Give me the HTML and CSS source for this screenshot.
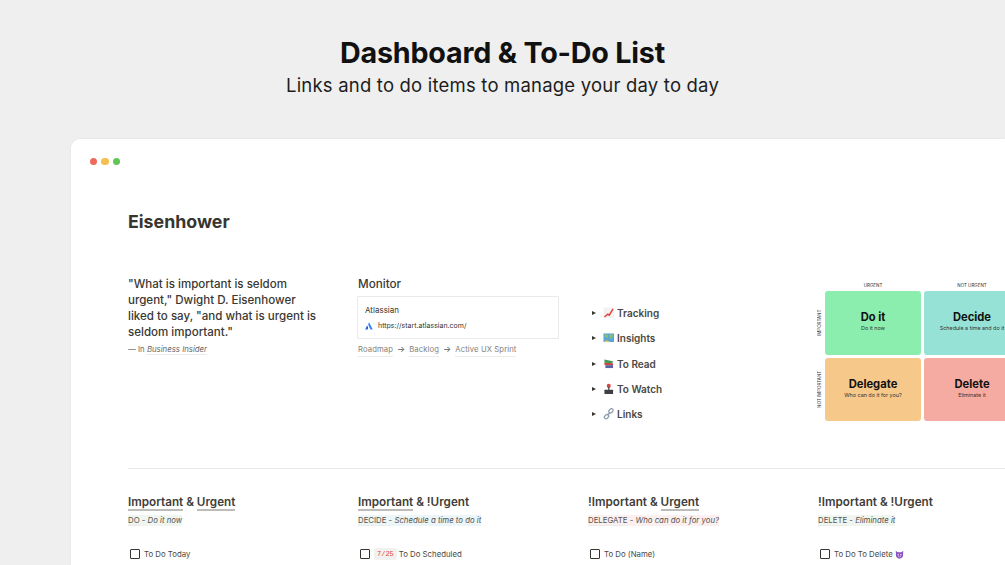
FILE: index.html
```html
<!DOCTYPE html>
<html lang="en">
<head>
<meta charset="utf-8">
<title>Dashboard &amp; To-Do List</title>
<link rel="stylesheet" href="styles.css">
</head>
<body>
<header class="hero">
  <h1>Dashboard &amp; To-Do List</h1>
  <p>Links and to do items to manage your day to day</p>
</header>
<main class="window">
  <div class="dots"><i class="dot red"></i><i class="dot yellow"></i><i class="dot green"></i></div>
  <h2 class="title">Eisenhower</h2>
  <section class="top">
    <div class="col">
      <p class="quote">"What is important is seldom urgent," Dwight D. Eisenhower liked to say, "and what is urgent is seldom important."</p>
      <p class="cite">— In <a class="muted-link"><em>Business Insider</em></a></p>
    </div>
    <div class="col">
      <h3 class="monitor">Monitor</h3>
      <div class="bookmark">
        <div class="bm-title">Atlassian</div>
        <div class="bm-url">
          <svg class="bm-icon" viewBox="0 0 10 10"><path fill="#2684ff" d="M5 .6C4 2 4 3.4 4.700 4.900L6.900 9.400H9.700L5.400.8C5.300.5 5.100.4 5 .6Z"/><path fill="#2060d8" d="M2.900 4.800C2.700 4.500 2.500 4.600 2.400 4.800L.3 9.400H3.200L3.900 7.800C4 7.200 3.600 5.700 2.900 4.800Z"/></svg>
          <span>https://start.atlassian.com/</span>
        </div>
      </div>
      <div class="crumbs"><a class="muted-link">Roadmap</a><span class="arrow">→</span><a class="muted-link">Backlog</a><span class="arrow">→</span><a class="muted-link">Active UX Sprint</a></div>
    </div>
    <ul class="col toggles">
      <li><i class="caret"></i><svg class="emoji" viewBox="0 0 12 12"><rect x=".5" y=".5" width="11" height="11" fill="#f4f1f1"/><path d="M1.500 10.500L5 7.500l1.500 1L10.500 2" fill="none" stroke="#e0413e" stroke-width="1.500"/></svg><span>Tracking</span></li>
      <li><i class="caret"></i><svg class="emoji" viewBox="0 0 12 12"><rect x=".5" y="1.500" width="11" height="9" fill="#58a6d6"/><path d="M1.500 2.500h3.500v3.500H2.500zM6.500 2.500h4l-1.500 4.500h-1.500z" fill="#8fbf6a"/><path d="M.5 10.500l3.500-2 3.500 2z" fill="#e8c86a"/></svg><span>Insights</span></li>
      <li><i class="caret"></i><svg class="emoji" viewBox="0 0 12 12"><path d="M1.500 1.500l9 2-1 2-8-.5z" fill="#3f9a55"/><path d="M1.500 5l9 .5v2.200l-9-.5z" fill="#c8473f"/><path d="M2.500 7.500h8v3h-8z" fill="#5a63a8"/></svg><span>To Read</span></li>
      <li><i class="caret"></i><svg class="emoji" viewBox="0 0 12 12"><circle cx="6" cy="3" r="2.100" fill="#e0413e"/><rect x="5.300" y="4" width="1.400" height="3.500" fill="#555"/><rect x="1.500" y="7" width="9" height="4.500" rx=".6" fill="#3d3f46"/></svg><span>To Watch</span></li>
      <li><i class="caret"></i><svg class="emoji" viewBox="0 0 12 12"><g fill="none" stroke="#8d9aa6" stroke-width="1.300"><rect x="5.800" y="1.300" width="5" height="3.400" rx="1.700" transform="rotate(-45 8.300 3)"/><rect x="1.200" y="7.300" width="5" height="3.400" rx="1.700" transform="rotate(-45 3.700 9)"/><path d="M4.500 7.500l3-3"/></g></svg><span>Links</span></li>
    </ul>
    <div class="col matrix">
      <span></span><span class="axis">URGENT</span><span class="axis">NOT URGENT</span>
      <span class="axis side">IMPORTANT</span>
      <div class="cell do"><b>Do it</b><small>Do it now</small></div>
      <div class="cell decide"><b>Decide</b><small>Schedule a time and do it</small></div>
      <span class="axis side">NOT IMPORTANT</span>
      <div class="cell delegate"><b>Delegate</b><small>Who can do it for you?</small></div>
      <div class="cell delete"><b>Delete</b><small>Eliminate it</small></div>
    </div>
  </section>
  <hr class="rule">
  <section class="lists">
    <div>
      <h3 class="quad"><u>Important</u> &amp; <u>Urgent</u></h3>
      <p class="sub"><span class="hl h-green"><a class="muted-link">DO</a> - <em>Do it now</em></span></p>
      <label class="todo"><i class="box"></i><span>To Do Today</span></label>
    </div>
    <div>
      <h3 class="quad"><u>Important</u> &amp; !Urgent</h3>
      <p class="sub"><span class="hl h-blue"><a class="muted-link">DECIDE</a> - <em>Schedule a time to do it</em></span></p>
      <label class="todo"><i class="box"></i><code class="date">7/25</code><span>To Do Scheduled</span></label>
    </div>
    <div>
      <h3 class="quad">!Important &amp; <u>Urgent</u></h3>
      <p class="sub"><span class="hl h-red"><a class="muted-link">DELEGATE</a> - <em>Who can do it for you?</em></span></p>
      <label class="todo"><i class="box"></i><span>To Do (Name)</span></label>
    </div>
    <div>
      <h3 class="quad">!Important &amp; !Urgent</h3>
      <p class="sub"><span class="hl h-green"><a class="muted-link">DELETE</a> - <em>Eliminate it</em></span></p>
      <label class="todo"><i class="box"></i><span>To Do To Delete</span><svg class="devil" viewBox="0 0 12 12"><path d="M1 1l2.500 2h5L11 1l-.3 5.500A4.700 4.700 0 0 1 6 11.500 4.700 4.700 0 0 1 1.300 6.500z" fill="#8a4fc0"/><circle cx="4.200" cy="6.300" r=".9" fill="#fff"/><circle cx="7.800" cy="6.300" r=".9" fill="#fff"/><path d="M4 8.500q2 1.500 4 0" stroke="#fff" stroke-width=".7" fill="none"/></svg></label>
    </div>
  </section>
</main>
</body>
</html>
```
FILE: styles.css
```css
* { box-sizing: border-box; }
html, body { width: 1005px; height: 565px; overflow: hidden; }
body {
  margin: 0;
  background: #efefef;
  font-family: Inter, "Liberation Sans", sans-serif;
  color: #37352f;
}
.hero { height: 139px; padding-top: 35px; text-align: center; color: #111; }
.hero h1 { margin: 0; font-size: 28.700px; line-height: 36px; font-weight: 700; letter-spacing: -0.2px; }
.hero p { margin: 0; font-size: 18.500px; line-height: 28px; font-weight: 400; letter-spacing: 0.2px; color: #1d1d1d; }

.window {
  width: 934px;
  height: 426px;
  margin-left: 71px;
  padding: 0 0 0 57px;
  background: #fff;
  border-radius: 9px 0 0 0;
  box-shadow: 0 0 3px rgba(0,0,0,.06);
  overflow: hidden;
}
.dots { display: flex; gap: 4.300px; margin-left: -38.500px; padding-top: 18.500px; height: 44px; }
.dot { width: 7.400px; height: 7.400px; border-radius: 50%; }
.red { background: #ed6a5e; }
.yellow { background: #f4bf4f; }
.green { background: #61c554; }

.title { margin: 26px 0 0; height: 26px; font-size: 17.800px; line-height: 26px; font-weight: 700; color: #37352f; }

.top { display: grid; grid-template-columns: repeat(4, 230px); margin-top: 41px; height: 192px; }
.col { margin: 0; padding: 0; min-width: 0; }
.quote { margin: 0; width: 196px; font-size: 11.550px; line-height: 16px; font-weight: 550; color: #3a3833; }
.cite { margin: 3px 0 0; font-size: 7.800px; line-height: 12px; color: #6b6a66; }
.muted-link { border-bottom: 1px solid #ecebe9; }

.monitor { margin: 0 0 4px; font-size: 11.700px; line-height: 16px; font-weight: 550; color: #3a3833; }
.bookmark { width: 202px; height: 43px; margin-left: -1px; padding: 7px 7px; border: 1px solid #e9e9e7; border-radius: 1px; }
.bm-title { font-size: 8px; line-height: 12px; color: #37352f; }
.bm-url { display: flex; align-items: center; gap: 5px; margin-top: 4px; font-size: 7px; line-height: 12px; }
.bm-icon { width: 8px; height: 8px; }
.crumbs { display: flex; align-items: baseline; margin-top: 5px; font-size: 7.700px; line-height: 12px; color: #83827e; letter-spacing: .1px; }
.arrow { margin: 0 4px; color: #55544f; font-size: 8.500px; line-height: 10px; }

.toggles { list-style: none; padding-top: 24.300px; }
.toggles li { display: flex; align-items: center; height: 25.300px; font-size: 10px; font-weight: 600; color: #4a4843; }
.caret { width: 0; height: 0; margin: 0 7px 0 4px; border-left: 4.500px solid #37352f; border-top: 2.700px solid transparent; border-bottom: 2.700px solid transparent; }
.emoji { width: 11.500px; height: 11.500px; margin-right: 2.500px; }

.matrix {
  display: grid;
  grid-template-columns: 4px 96px 96px;
  grid-template-rows: 8px 64px 63px;
  gap: 3px;
  margin-top: 4px;
  width: 210px;
}
.axis { font-size: 4.500px; line-height: 11px; text-align: center; color: #333; white-space: nowrap; }
.side { display: flex; align-items: center; justify-content: center; writing-mode: vertical-rl; transform: rotate(180deg); line-height: 4px; }
.cell { display: flex; flex-direction: column; align-items: center; justify-content: center; padding-bottom: 4px; border-radius: 3px; color: #111; }
.cell b { font-size: 11.200px; line-height: 14px; font-weight: 700; }
.cell small { margin-top: 1px; font-size: 5.400px; line-height: 7px; color: #333; white-space: nowrap; }
.do { background: #8bedae; }
.decide { background: #96e2d6; }
.delegate { background: #f6c98b; }
.delete { background: #f6aba2; }

.rule { margin: 0; border: 0; border-top: 1px solid #e9e9e7; }
.lists { display: grid; grid-template-columns: repeat(4, 230px); padding-top: 25px; }
.quad { margin: 0; font-size: 11.700px; line-height: 16px; font-weight: 600; color: #3f3d38; }
.quad u { text-decoration: none; border-bottom: 2px solid #bdbcb9; }
.sub { margin: 4px 0 0; font-size: 7.800px; line-height: 12px; color: #55534e; }
.hl { padding-bottom: 1px; }
.h-green { background: #f1f5f0; }
.h-blue { background: #ecf5f8; }
.h-red { background: #fcefef; }
.todo { display: flex; align-items: center; margin-top: 22px; padding-left: 2px; font-size: 7.800px; line-height: 12px; color: #4a4843; }
.box { width: 9.500px; height: 9.500px; margin-right: 4.500px; border: 1.100px solid #37352f; border-radius: 1px; }
.date { margin: 0 2px 0 0; padding: 1px 3px; background: #f1f1ef; border-radius: 2px; color: #e5433b; font-family: "Liberation Mono", monospace; font-size: 7px; line-height: 10px; }
.devil { width: 9px; height: 9px; margin-left: 2px; }
```
